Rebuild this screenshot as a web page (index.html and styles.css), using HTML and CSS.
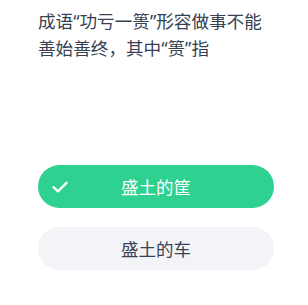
FILE: index.html
```html
<!DOCTYPE html>
<html lang="zh-CN">
<head>
<meta charset="utf-8">
<link rel="stylesheet" href="styles.css">
</head>
<body>
<div class="page">
  <p class="question">成语“功亏一篑”形容做事不能善始善终，其中“篑”指</p>
  <div class="options">
    <div class="option correct">
      <svg class="check" width="16" height="12" viewBox="0 0 16 12"><path d="M1.5 6.2 L6 10.3 L14.5 1.8" fill="none" stroke="#fff" stroke-width="2.4" stroke-linecap="round" stroke-linejoin="round"/></svg>
      <span>盛土的筐</span>
    </div>
    <div class="option">
      <span>盛土的车</span>
    </div>
  </div>
</div>
</body>
</html>
```

FILE: styles.css
```css
html, body {
  margin: 0;
  padding: 0;
  background: #ffffff;
}
.page {
  width: 308px;
  height: 305px;
  padding: 8px 34px 0 38px;
  box-sizing: border-box;
  font-family: "Noto Sans", "Noto Sans CJK SC", sans-serif;
}
.question {
  margin: 0;
  max-width: 234px;
  font-size: 17.6px;
  line-height: 27px;
  font-weight: 400;
  color: #364152;
}
.options {
  margin-top: 103px;
  display: flex;
  flex-direction: column;
  gap: 19px;
}
.option {
  position: relative;
  height: 43px;
  border-radius: 22px;
  background: #f3f4f7;
  display: flex;
  align-items: center;
  justify-content: center;
  font-size: 17.5px;
  font-weight: 400;
  color: #3a4353;
}
.option.correct {
  background: #2fd190;
  color: #ffffff;
}
.check {
  position: absolute;
  left: 14px;
  top: 16px;
}
```
